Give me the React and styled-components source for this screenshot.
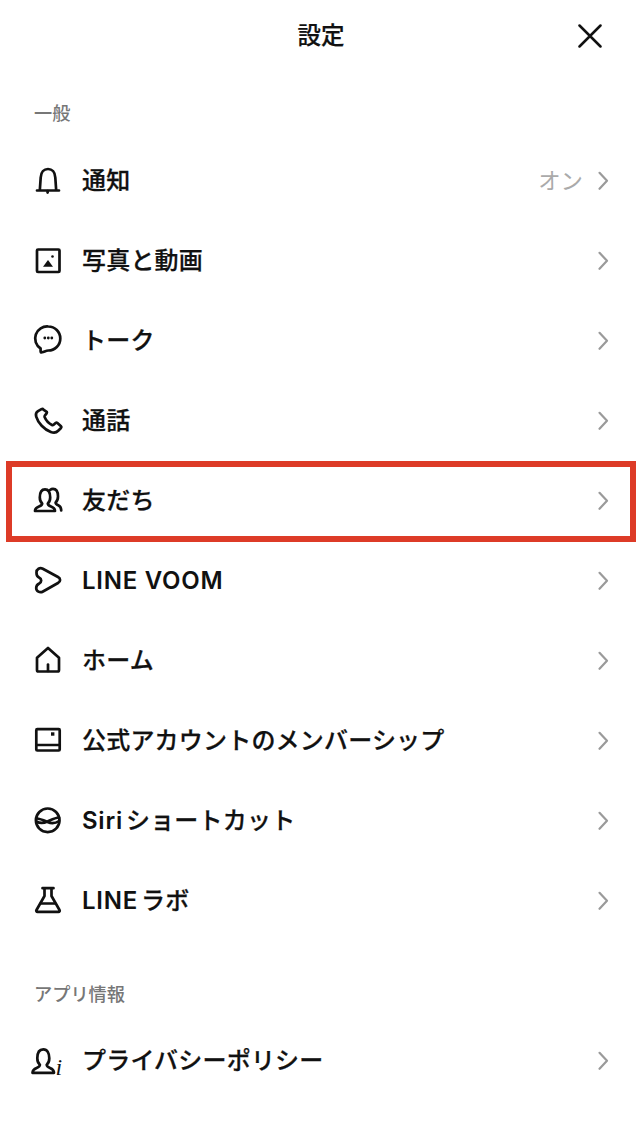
import React from "react";
import styled, { createGlobalStyle } from "styled-components";

const Global = createGlobalStyle`
  html, body { margin: 0; padding: 0; background: #fff; }
  body { font-family: Inter, "Noto Sans CJK JP", sans-serif; color: #111; }
`;

const Page = styled.div`
  width: 642px;
  height: 1146px;
  overflow: hidden;
  background: #fff;
`;

const Header = styled.header`
  display: grid;
  grid-template-columns: 1fr auto 1fr;
  align-items: center;
  height: 72px;
  padding: 0 40px;
  box-sizing: border-box;
`;

const Title = styled.h1`
  grid-column: 2;
  margin: 0;
  font-size: 23.5px;
  line-height: 32px;
  font-weight: 500;
  color: #111;
  -webkit-text-stroke: 0.2px #111;
`;

const CloseButton = styled.button`
  grid-column: 3;
  justify-self: end;
  display: flex;
  padding: 0;
  border: 0;
  background: none;
  color: #111;
`;

const SectionLabel = styled.h2`
  margin: 0;
  padding: ${(p) => (p.$first ? "30px" : "42px")} 34px ${(p) => (p.$first ? "16px" : "15px")};
  font-size: 18.2px;
  line-height: 23px;
  font-weight: 500;
  color: #777;
`;

const List = styled.ul`
  margin: 0;
  padding: 0;
  list-style: none;
`;

const Row = styled.li`
  position: relative;
  display: flex;
  align-items: center;
  height: 80px;
  padding: 0 33px 0 32px;
  box-sizing: border-box;
  ${(p) =>
    p.$marked &&
    `&::after {
      content: "";
      position: absolute;
      left: 6px;
      right: 6px;
      top: 0;
      bottom: -1px;
      border: 6px solid #dd3b27;
    }`}
`;

const IconBox = styled.span`
  flex: none;
  display: flex;
  width: 32px;
  height: 32px;
  margin-right: 18px;
  color: #111;
  & > svg {
    overflow: visible;
  }
`;

const Label = styled.span`
  flex: 1;
  font-size: 24px;
  line-height: 32px;
  font-weight: 500;
  letter-spacing: 0.2px;
  color: #111;
  -webkit-text-stroke: 0.25px #111;
`;

const Latin = styled.span`
  font-weight: 600;
  letter-spacing: 0.75px;
  margin-right: ${(p) => p.$gap || 0}px;
  -webkit-text-stroke: 0;
`;

const Value = styled.span`
  font-size: 22.4px;
  line-height: 32px;
  font-weight: 400;
  color: #aaa;
  margin-right: 14px;
`;

const Chevron = styled.svg`
  flex: none;
  display: block;
  color: #9a9a9a;
`;

const Svg = ({ children }) => (
  <svg width="32" height="32" viewBox="0 0 32 32" fill="none" stroke="currentColor" strokeWidth="2.7" strokeLinecap="round" strokeLinejoin="round">
    {children}
  </svg>
);

const icons = {
  bell: (
    <Svg>
      <path d="M5 25.5h22M7.8 25.5 8.7 12.5C9 7 12 4 16 4s7 3 7.3 8.5l.9 13" />
      <path d="M15.6 26v1.6" />
    </Svg>
  ),
  photo: (
    <Svg>
      <rect x="5" y="4.5" width="22.5" height="22.5" rx="1" />
      <path d="M11 21.8 16 15l5 6.8z" fill="currentColor" stroke="none" />
      <circle cx="20.5" cy="11.5" r="1.3" fill="currentColor" stroke="none" />
    </Svg>
  ),
  talk: (
    <Svg>
      <path d="M16.3 1.5a12 12 0 0 1 0 24c-2 0-3.500 1-6.300 1.800-1.100.3-1.400-.2-1.400-1.200v-2.600A12 12 0 0 1 16.300 1.500z" />
      <g fill="currentColor" stroke="none">
        <circle cx="12.800" cy="13" r="1.400" />
        <circle cx="16.300" cy="13" r="1.400" />
        <circle cx="19.800" cy="13" r="1.400" />
      </g>
    </Svg>
  ),
  phone: (
    <Svg>
      <path d="M9.500 4.200 6 6.200C4.200 7.300 3.500 9.200 4.200 11.600c2 6.600 7.800 12.800 14.600 15.400 3 1.100 5.600.7 7.400-1.200l2.800-2.800c.5-.6.5-1.300 0-1.800l-3.600-3.200c-.6-.5-1.200-.5-1.800 0l-2 1.800c-.5.4-1 .5-1.600.2-3.200-1.600-6-4.600-7.400-8-.2-.6 0-1.100.4-1.600l1.600-2c.4-.5.4-1.100.1-1.600L11.400 4.600c-.5-.7-1.200-.8-1.900-.4z" />
    </Svg>
  ),
  friends: (
    <Svg>
      <path d="M3 26h20c0-2.200-1.500-3.500-4-4.500-2.500-1-3.200-1.800-3.200-3 1.700-1.500 2.400-3.500 2.400-6C18.200 7.500 16.500 4.300 13 4.300S7.800 7.500 7.800 12.500c0 2.500.7 4.500 2.400 6 0 1.200-.7 2-3.200 3-2.500 1-4 2.300-4 4.500z" />
      <path d="M18 5c1-.8 2-1.200 3-1.200 3.300 0 5 3.300 5 7.700 0 2.500-.7 4.500-2.400 6 0 1.200.7 2 2.600 2.800 1.900.9 3 2.300 3 5.200" />
    </Svg>
  ),
  voom: (
    <Svg>
      <path d="M4.500 7.500C4.500 4 7.800 2.200 10.800 3.700L26 12c2.800 1.500 2.800 4.500 0 6L11 26.500c-3.200 1.800-6.800-.2-6.800-3.500 0-2 1-3.500 3-4.500 1.500-.8 2-1.700 2-3s-.7-2.300-2.200-3c-1.700-.8-2.500-2.300-2.500-4.500z" />
    </Svg>
  ),
  home: (
    <Svg>
      <path d="M16 3 5 12.800V25c0 .9.6 1.500 1.500 1.500h19c.9 0 1.500-.6 1.500-1.500V12.800z" />
      <path d="M16 19.500V26" />
    </Svg>
  ),
  book: (
    <Svg>
      <rect x="4.300" y="4.200" width="23.400" height="21.300" rx="1" />
      <path d="M4.300 20h23.400" />
      <rect x="19" y="7.300" width="3.400" height="3.400" fill="currentColor" stroke="none" />
    </Svg>
  ),
  siri: (
    <Svg>
      <circle cx="15.700" cy="15.300" r="11.800" />
      <path d="M4.500 13.500c4 .2 7 1.700 11 3.500 4 1.700 7.500 1.700 11.500-1M27 12.500c-4 .3-7 2-11.500 4-4 1.800-7.500 2-11 0" />
    </Svg>
  ),
  flask: (
    <Svg>
      <path d="M10.500 3.200h11M12.500 3.200v7.800L4.500 25c-.6 1 0 1.800 1 1.800h21c1 0 1.600-.8 1-1.800l-8-14V3.200" />
      <path d="M9 18.500h14" />
    </Svg>
  ),
  policy: (
    <Svg>
      <path d="M2.500 27.800H22c0-2.400-1.500-3.800-4-4.800-2.500-1-3.300-1.900-3.300-3.200 1.800-1.500 2.600-3.800 2.600-6.500 0-5.200-2-9-6-9s-6 3.800-6 9c0 2.700.8 5 2.600 6.500 0 1.300-.8 2.200-3.300 3.200-2.500 1-4 2.400-4.100 4.800z" />
      <text x="23.500" y="29.500" fontFamily="'Liberation Serif', serif" fontStyle="italic" fontSize="24" fill="currentColor" stroke="none">i</text>
    </Svg>
  ),
};

const general = [
  { icon: "bell", label: "通知", value: "オン" },
  { icon: "photo", label: "写真と動画" },
  { icon: "talk", label: "トーク" },
  { icon: "phone", label: "通話" },
  { icon: "friends", label: "友だち", marked: true },
  { icon: "voom", label: <Latin>LINE VOOM</Latin>, id: "voom" },
  { icon: "home", label: "ホーム" },
  { icon: "book", label: "公式アカウントのメンバーシップ" },
  { icon: "siri", label: <><Latin $gap={3}>Siri</Latin>ショートカット</>, id: "siri" },
  { icon: "flask", label: <><Latin $gap={3}>LINE</Latin>ラボ</>, id: "labo" },
];

const SettingRow = ({ icon, label, value, marked }) => (
  <Row $marked={marked}>
    <IconBox>{icons[icon]}</IconBox>
    <Label>{label}</Label>
    {value && <Value>{value}</Value>}
    <Chevron width="12" height="20" viewBox="0 0 12 20" fill="none" stroke="currentColor" strokeWidth="2.2" strokeLinecap="round" strokeLinejoin="round">
      <path d="M2.500 1.800l7.500 8-7.500 8" />
    </Chevron>
  </Row>
);

export default function App() {
  return (
    <Page>
      <Global />
      <Header>
        <Title>設定</Title>
        <CloseButton aria-label="閉じる">
          <svg width="24" height="24" viewBox="0 0 24 24" fill="none" stroke="currentColor" strokeWidth="2.5" strokeLinecap="round">
            <path d="M1.500 1.500l21 21M22.500 1.500l-21 21" />
          </svg>
        </CloseButton>
      </Header>
      <SectionLabel $first>一般</SectionLabel>
      <List>
        {general.map((r) => (
          <SettingRow key={r.id || r.label} {...r} />
        ))}
      </List>
      <SectionLabel>アプリ情報</SectionLabel>
      <List>
        <SettingRow icon="policy" label="プライバシーポリシー" />
      </List>
    </Page>
  );
}
